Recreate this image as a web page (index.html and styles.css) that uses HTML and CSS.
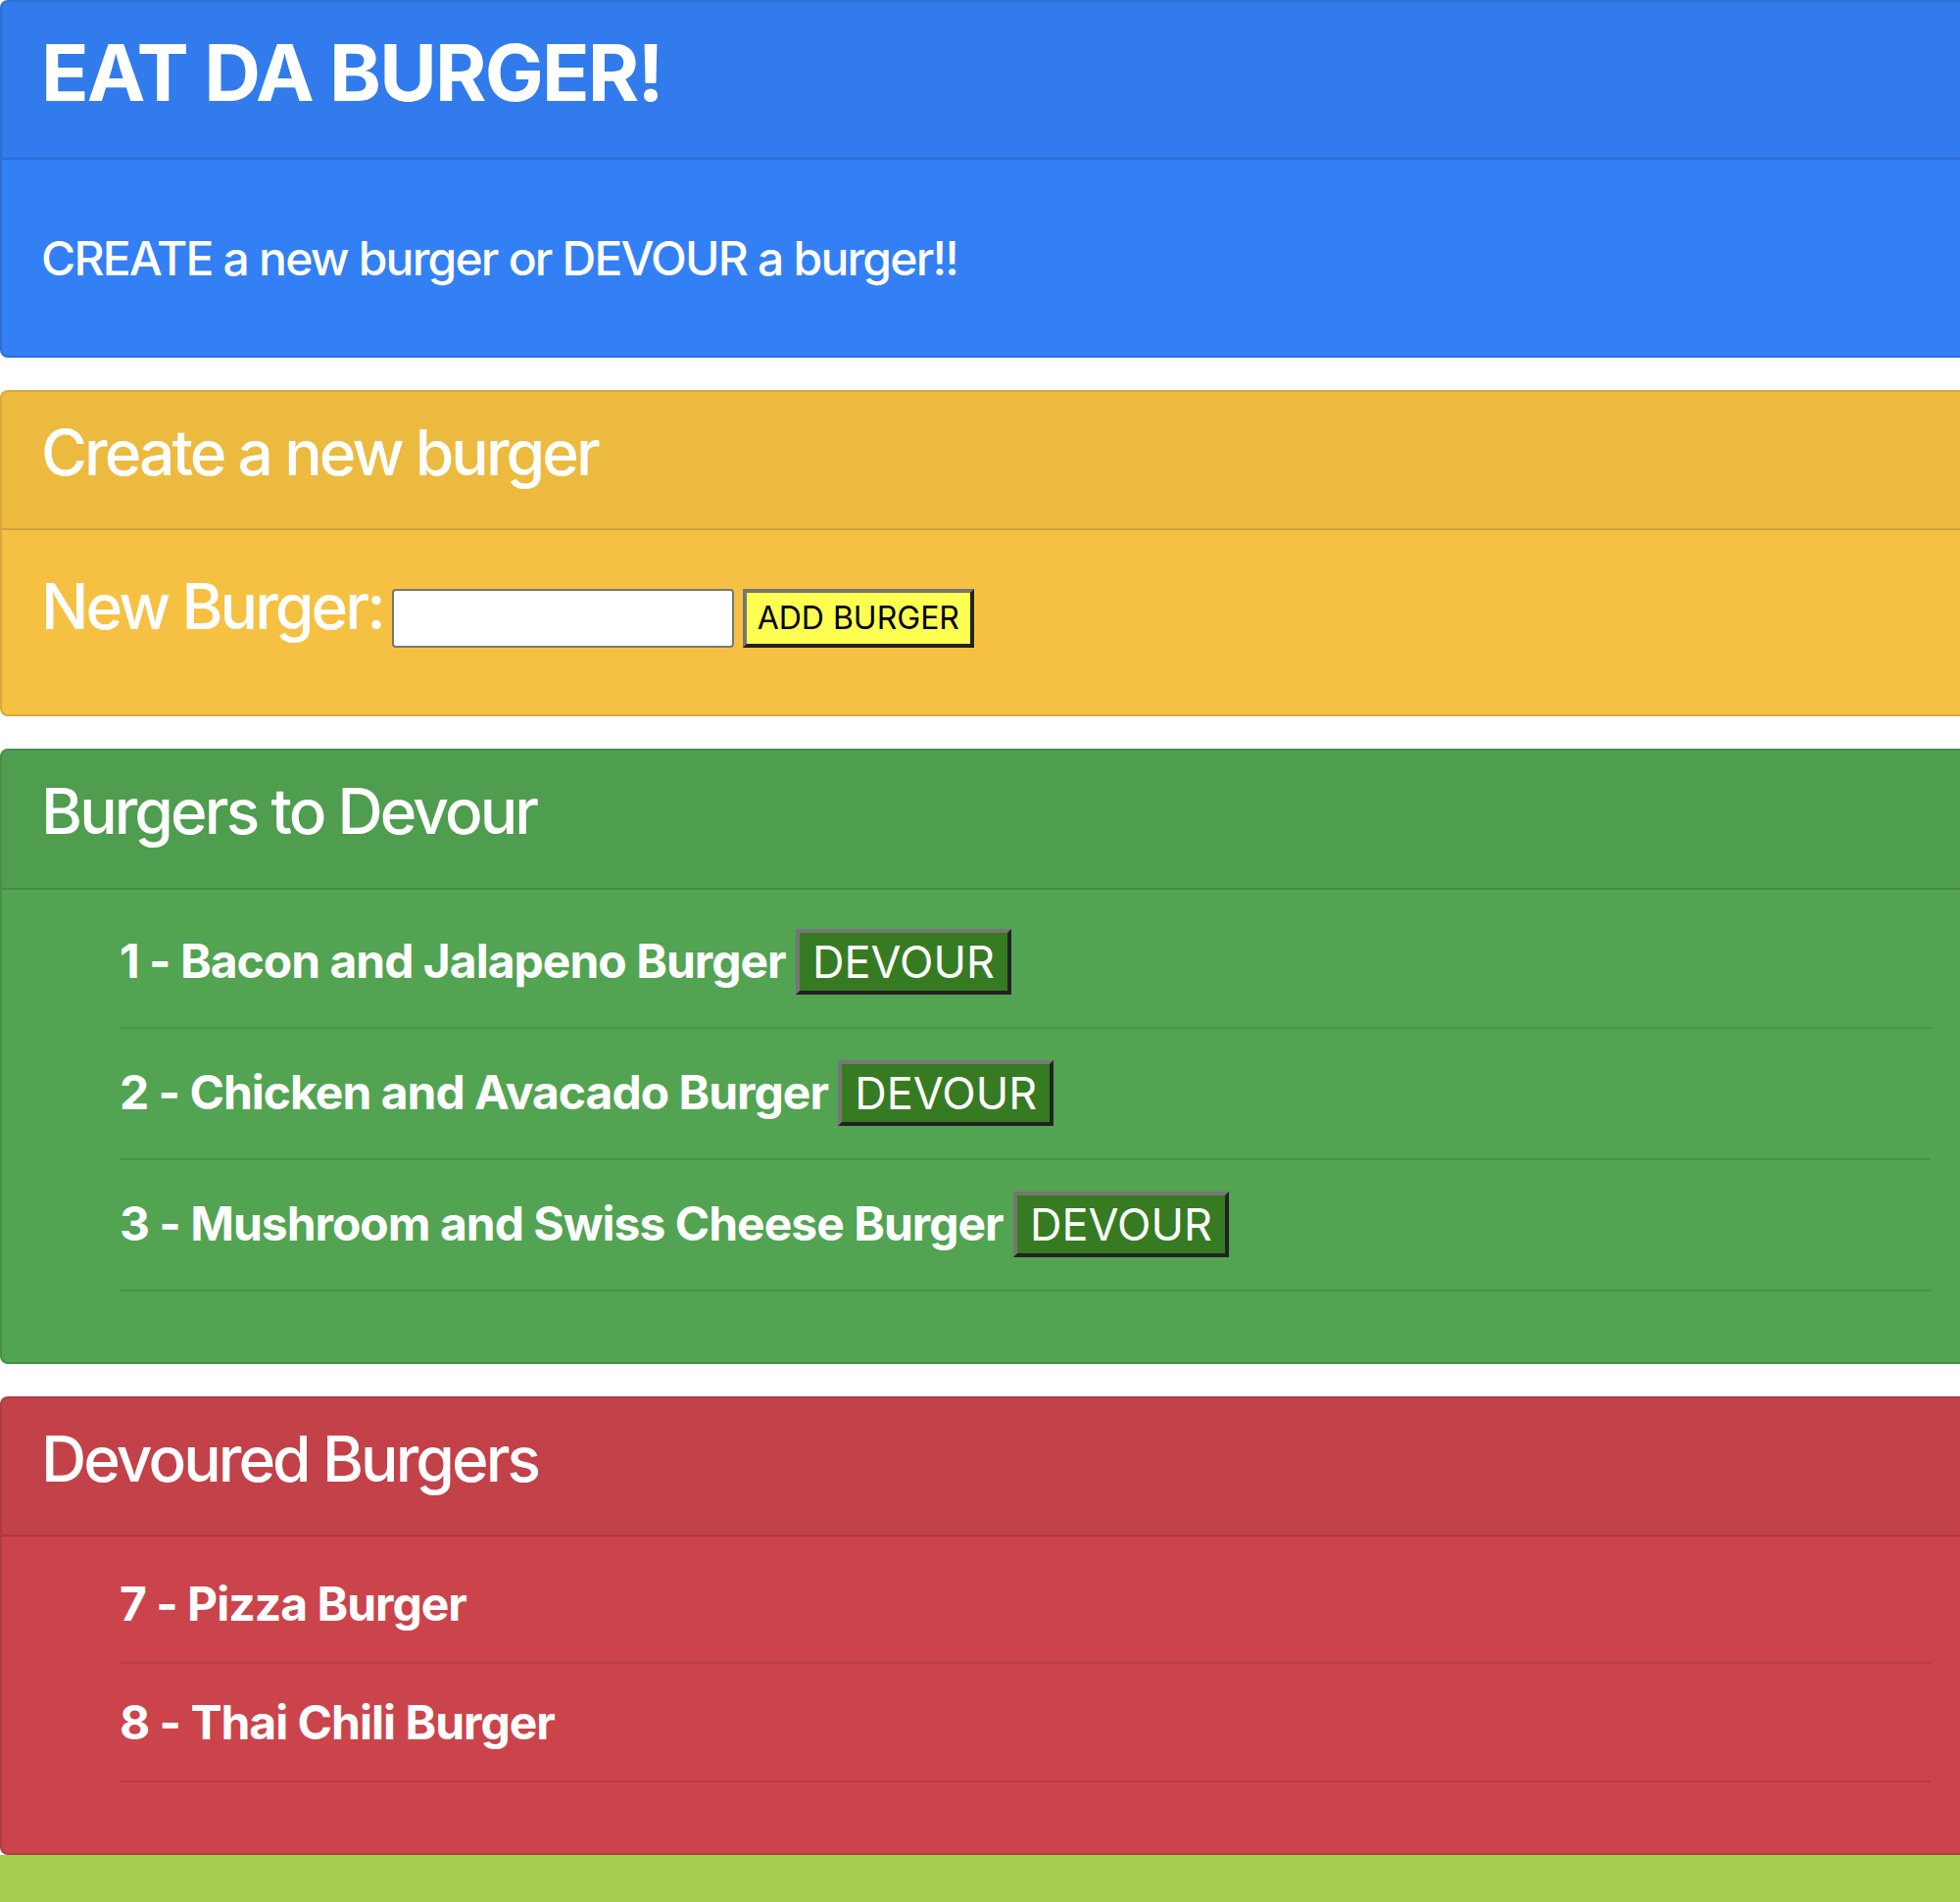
FILE: index.html
```html
<!DOCTYPE html>
<html lang="en">
<head>
<meta charset="utf-8">
<title>Eat Da Burger!</title>
<link rel="stylesheet" href="styles.css">
</head>
<body>
<main class="page">
  <section class="card card-blue">
    <header class="card-header"><h1 class="site-title">EAT DA BURGER!</h1></header>
    <div class="card-body"><h4 class="intro">CREATE a new burger or DEVOUR a burger!!</h4></div>
  </section>

  <section class="card card-yellow">
    <header class="card-header"><h2 class="card-title">Create a new burger</h2></header>
    <div class="card-body">
      <form class="burger-form">
        <label class="form-label" for="burger">New Burger:</label>
        <input id="burger" class="form-input" type="text">
        <button type="button" class="btn-add">ADD BURGER</button>
      </form>
    </div>
  </section>

  <section class="card card-green">
    <header class="card-header"><h2 class="card-title">Burgers to Devour</h2></header>
    <div class="card-body">
      <ul class="burger-list">
        <li class="burger-item"><h4 class="burger-name">1 - Bacon and Jalapeno Burger <button type="button" class="btn-devour">DEVOUR</button></h4></li>
        <li class="burger-item"><h4 class="burger-name">2 - Chicken and Avacado Burger <button type="button" class="btn-devour">DEVOUR</button></h4></li>
        <li class="burger-item"><h4 class="burger-name">3 - Mushroom and Swiss Cheese Burger <button type="button" class="btn-devour">DEVOUR</button></h4></li>
      </ul>
    </div>
  </section>

  <section class="card card-red">
    <header class="card-header"><h2 class="card-title">Devoured Burgers</h2></header>
    <div class="card-body">
      <ul class="burger-list">
        <li class="burger-item burger-item-done"><h4 class="burger-name">7 - Pizza Burger</h4></li>
        <li class="burger-item burger-item-done"><h4 class="burger-name">8 - Thai Chili Burger</h4></li>
      </ul>
    </div>
  </section>
</main>
<footer class="footer"></footer>
</body>
</html>
```

FILE: styles.css
```css
* {
  box-sizing: border-box;
}

html {
  overflow: hidden;
}

html,
body {
  margin: 0;
  padding: 0;
}

body {
  font-family: Inter, "Helvetica Neue", "Liberation Sans", Arial, sans-serif;
  color: #fff;
  background: #fff;
}

.page {
  overflow: hidden;
}

.card {
  margin: 0 -12px 33px 0;
  border: 2px solid rgba(0, 0, 0, 0.125);
  border-radius: 8px;
}

.card-red {
  margin-bottom: 0;
}

.card-blue { background: #3380f5; }
.card-yellow { background: #f6c143; }
.card-green { background: #52a352; }
.card-red { background: #cb444c; }

.card-header {
  padding: 24px 40px 23px;
  background: rgba(0, 0, 0, 0.035);
  border-bottom: 2px solid rgba(0, 0, 0, 0.125);
  border-radius: 6px 6px 0 0;
}

.site-title {
  margin: 0 0 16px;
  font-size: 80px;
  line-height: 96px;
  font-weight: 700;
  letter-spacing: -1.8px;
}

.card-title {
  margin: 0 0 16px;
  font-size: 64px;
  line-height: 76.8px;
  font-weight: 500;
  letter-spacing: -2.9px;
}

.card-body {
  padding: 40px;
}

.intro {
  margin: 32px 0 30px;
  font-size: 48px;
  line-height: 57.6px;
  font-weight: 500;
  letter-spacing: -1.8px;
}

.burger-form {
  display: flex;
  align-items: baseline;
  gap: 9px;
  margin: 0 0 28px;
}

.form-label {
  font-size: 64px;
  line-height: 76.8px;
  font-weight: 500;
  letter-spacing: -2.9px;
}

.form-input {
  width: 349px;
  height: 60px;
  padding: 0 8px;
  font-family: inherit;
  font-size: 32px;
  background: #fff;
  border: 2px solid #767676;
  border-radius: 4px;
}

.btn-add {
  margin: 0;
  padding: 7px 11px;
  font-family: inherit;
  font-size: 32px;
  line-height: 38px;
  font-weight: 400;
  color: #000;
  background: #ffff52;
  border: 4px solid;
  border-color: #767676 #222 #222 #767676;
  border-radius: 0;
}

.burger-list {
  margin: 0 0 32px;
  padding: 0 0 0 80px;
  list-style: none;
}

.burger-item {
  padding: 32.5px 0;
  border-bottom: 2px solid rgba(0, 0, 0, 0.1);
}

.burger-item-done {
  padding: 31px 0;
}

.burger-item:first-child {
  padding-top: 0;
}

.burger-name {
  margin: 0;
  font-size: 48px;
  line-height: 57px;
  font-weight: 700;
  letter-spacing: -1px;
}

.btn-devour {
  margin: 0;
  padding: 3px 13px 2px;
  font-family: inherit;
  font-size: 45px;
  line-height: 54px;
  font-weight: 400;
  letter-spacing: 0;
  color: #fff;
  background: #367b22;
  border: 4px solid;
  border-color: #767676 #222 #222 #767676;
  border-radius: 0;
  vertical-align: baseline;
}

.footer {
  height: 80px;
  background: #a6cc50;
}
```
